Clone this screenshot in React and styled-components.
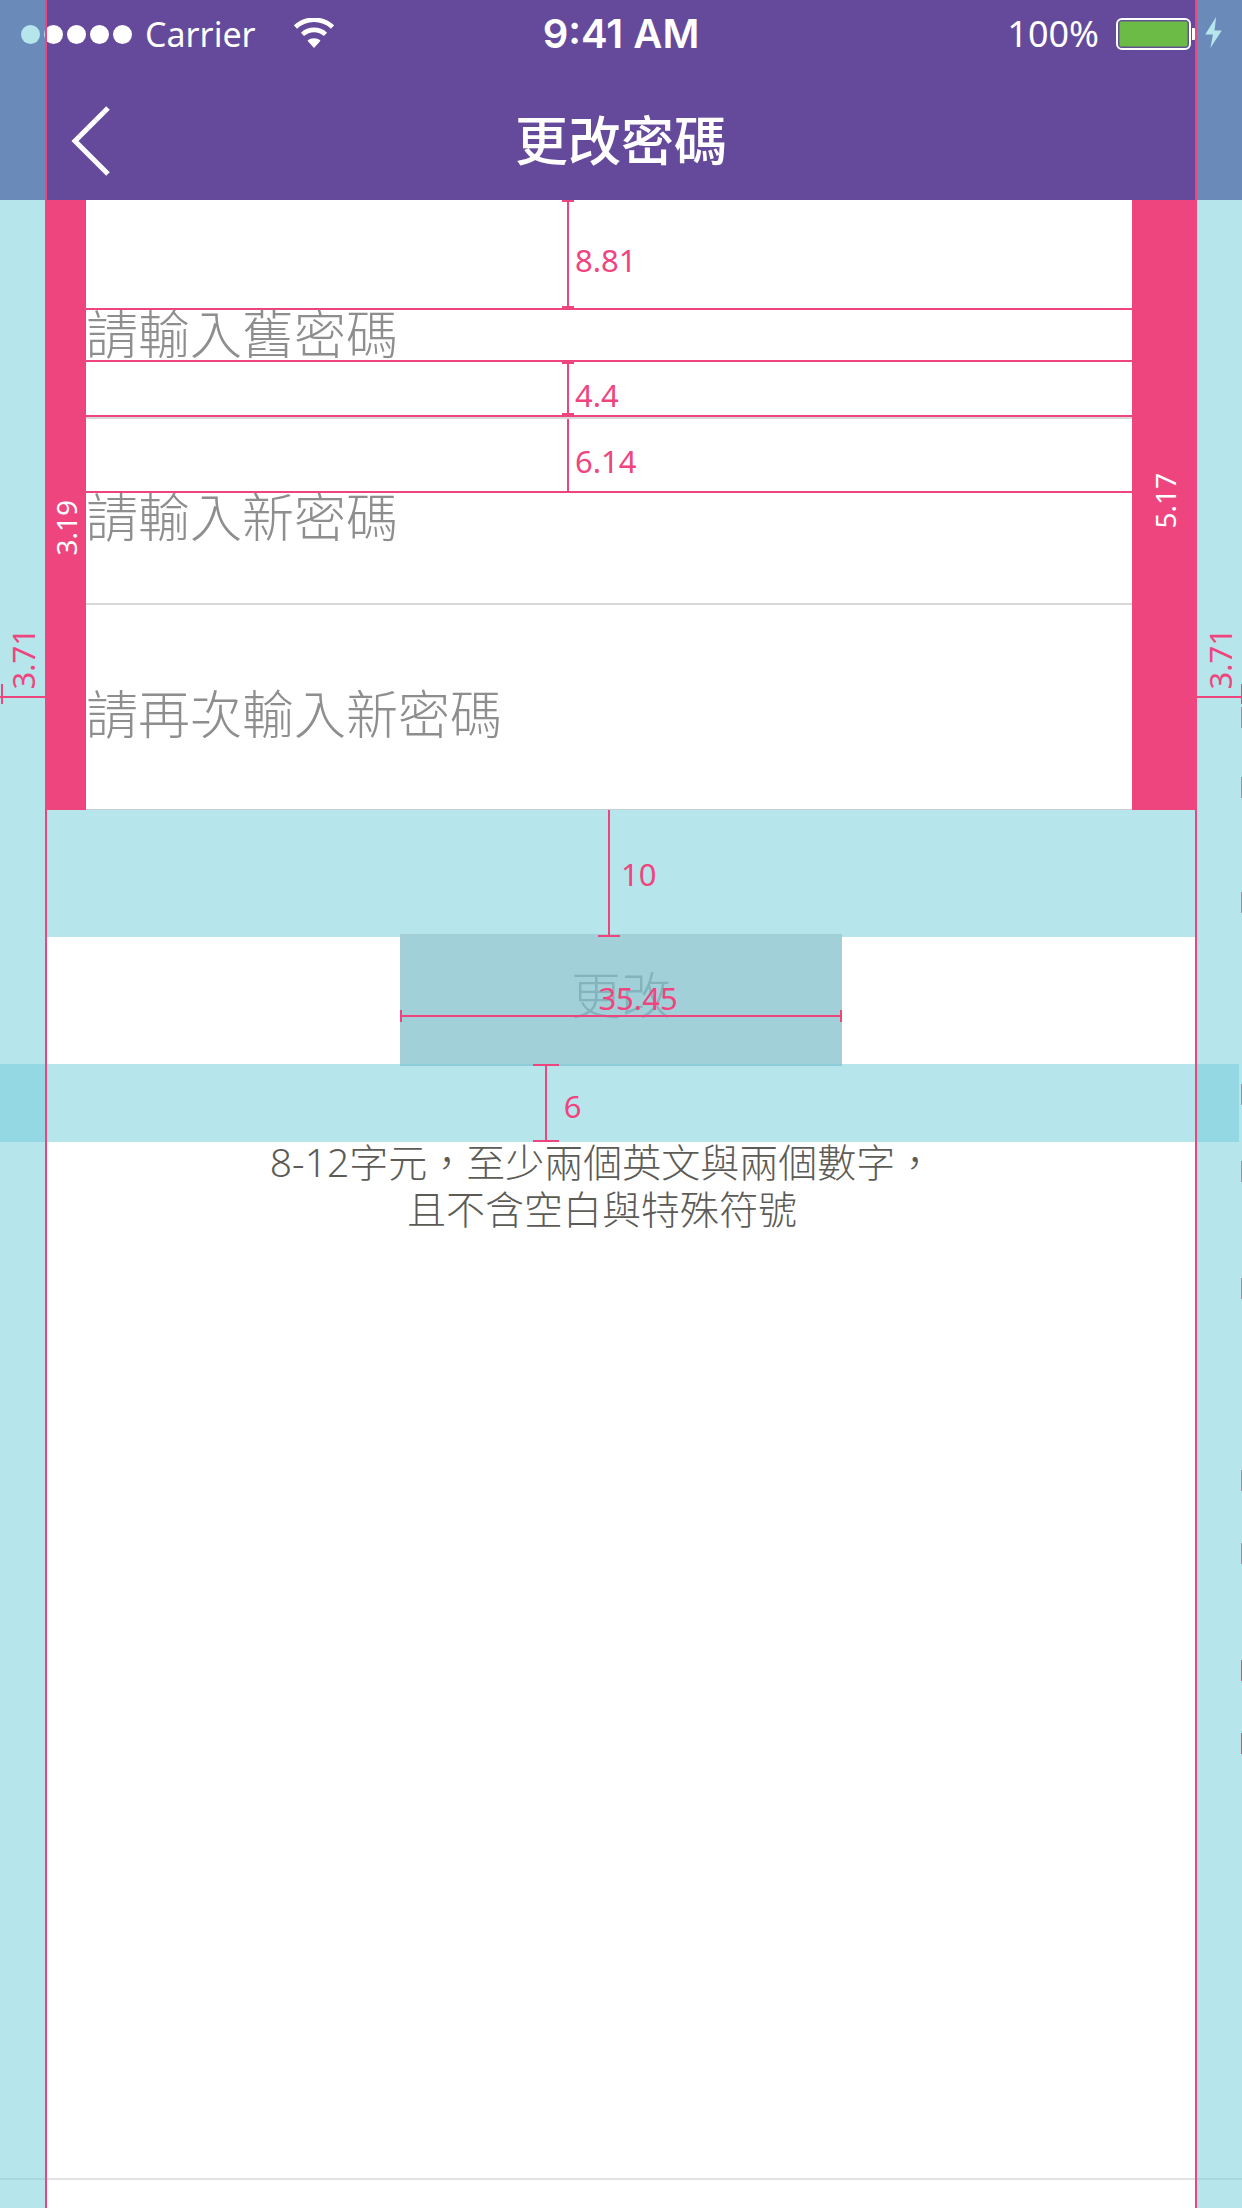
import React from "react";
import styled, { createGlobalStyle, css } from "styled-components";

const pink = "#ef457f";
const purple = "#654a9b";
const cyan = "#b6e5ec";
const glass = "rgba(112, 204, 218, 0.5)";
const latin = `"Noto Sans", "Open Sans", "Noto Sans CJK TC", sans-serif`;

const GlobalStyle = createGlobalStyle`
  *, *::before, *::after { box-sizing: border-box; }
  body { margin: 0; background: #fff; font-family: ${latin}; }
  button, input { font: inherit; border: 0; margin: 0; padding: 0; background: none; }
`;

const Page = styled.div`
  position: relative;
  display: flex;
  flex-direction: column;
  min-height: 100vh;
  overflow: hidden;
`;

const Header = styled.header`
  background: ${purple};
  color: #fff;
`;

const StatusBar = styled.div`
  display: grid;
  grid-template-columns: 1fr auto 1fr;
  align-items: center;
  height: 68px;
  padding: 0 20px;
  line-height: 40px;
`;

const StatusGroup = styled.div`
  display: flex;
  align-items: center;
  justify-content: ${(p) => (p.$end ? "flex-end" : "flex-start")};
  font-size: ${(p) => (p.$end ? 36 : 34)}px;
`;

const Dots = styled.div`
  display: flex;
  gap: 4px;
  margin: 0 13px 0 1px;
`;

const Dot = styled.span`
  width: 19px;
  height: 19px;
  border-radius: 50%;
  background: #fff;
`;

const WifiIcon = styled.svg`
  width: 40px;
  height: 30px;
  margin-left: 38px;
  margin-bottom: 2px;
`;

const Time = styled.time`
  font-family: Inter, sans-serif;
  font-weight: 600;
  font-size: 40px;
`;

const BatteryIcon = styled.svg`
  flex: none;
  width: 81px;
  height: 32px;
  margin: 0 8px 0 17px;
`;

const BoltIcon = styled.svg`
  flex: none;
  width: 17px;
  height: 31px;
  margin-bottom: 4px;
`;

const NavBar = styled.nav`
  display: grid;
  grid-template-columns: 1fr auto 1fr;
  align-items: center;
  height: 132px;
  padding: 14px 71px 0;
`;

const BackButton = styled.button`
  justify-self: start;
  display: flex;
  cursor: pointer;
  svg { width: 40px; height: 70px; }
`;

const Title = styled.h1`
  margin: 0 0 6px;
  font-family: "Noto Sans CJK TC", sans-serif;
  font-size: 53px;
  line-height: 72px;
  font-weight: 500;
`;

const Main = styled.main`
  flex: 1;
`;

const FormArea = styled.div`
  display: flex;
  margin: 0 45px;
`;

const Strip = styled.div`
  display: flex;
  justify-content: center;
  flex: 0 0 ${(p) => p.$width}px;
  padding-top: ${(p) => p.$offset}px;
  background: ${pink};
  color: #fff;
`;

const SideLabel = styled.span`
  align-self: ${(p) => (p.$center ? "center" : "flex-start")};
  writing-mode: vertical-rl;
  transform: rotate(180deg);
  font-size: ${(p) => (p.$center ? 31 : 28)}px;
  line-height: 40px;
`;

const Fields = styled.div`
  flex: 1;
  min-width: 0;
  border-bottom: 1px solid #c8cfd0;
`;

const Rule = styled.div`
  height: 2px;
  background: ${(p) => (p.$grey ? "#d8d8d8" : pink)};
`;

const Gap = styled.div`
  display: flex;
  align-items: stretch;
  height: ${(p) => p.$height}px;
`;

const Input = styled.input`
  display: block;
  width: 100%;
  height: 76px;
  margin: -16px 0 -10px;
  font-family: "Noto Sans CJK TC", sans-serif;
  font-weight: 300;
  font-size: 52px;
  line-height: 76px;
  color: #555;
  outline: 0;
  &::placeholder { color: #8e8e8e; opacity: 1; }
`;

const Bracket = styled.span`
  position: relative;
  z-index: 1;
  display: flex;
  justify-content: center;
  width: ${(p) => p.$cap}px;
  ${(p) => !p.$openTop && css`border-top: 2px solid ${pink};`}
  ${(p) => !p.$openBottom && css`border-bottom: 2px solid ${pink};`}
  &::before {
    content: "";
    width: 2px;
    background: ${pink};
  }
`;

const Measure = styled.div`
  display: flex;
  gap: ${(p) => p.$gap}px;
  margin-left: ${(p) => p.$left}%;
  color: ${pink};
  font-size: 31px;
  line-height: 40px;
`;

const MeasureText = styled.span`
  align-self: center;
  padding-top: ${(p) => p.$drop}px;
`;

const Band = styled.div`
  display: flex;
  height: 127px;
  margin: 0 47px;
  background: ${cyan};
`;

const GlassBand = styled.div`
  position: relative;
  display: flex;
  height: 78px;
  margin-right: 3px;
  background: ${glass};
`;

const ActionRow = styled.div`
  position: relative;
  display: flex;
  justify-content: center;
  height: 127px;
`;

const SubmitButton = styled.button`
  flex: 0 0 442px;
  height: 132px;
  margin-top: -3px;
  padding-bottom: 16px;
  border: 1px solid #a5cdd5;
  background: #a2d0d8;
  color: #83b3bc;
  font-family: "Noto Sans CJK TC", sans-serif;
  font-weight: 300;
  font-size: 50px;
  cursor: pointer;
`;

const WidthMeasure = styled.div`
  position: absolute;
  top: 41px;
  left: 50%;
  width: 442px;
  transform: translateX(-50%);
  color: ${pink};
  font-size: 31px;
  line-height: 40px;
  text-align: center;
  padding-left: 34px;
  pointer-events: none;
`;

const WidthLine = styled.span`
  position: absolute;
  top: 32px;
  left: 0;
  width: 100%;
  height: 12px;
  border: solid ${pink};
  border-width: 0 2px;
  &::before {
    content: "";
    display: block;
    height: 2px;
    margin-top: 5px;
    background: ${pink};
  }
`;

const Hint = styled.p`
  margin: -4px 0 0;
  padding-right: 38px;
  font-family: "Noto Sans", "Noto Sans CJK TC", sans-serif;
  font-weight: 300;
  font-size: 39px;
  line-height: 47px;
  text-align: center;
  color: #5c5b56;
`;

const Footer = styled.footer`
  height: 30px;
  border-top: 2px solid #e3e3e3;
`;

const Gutter = styled.aside`
  position: absolute;
  top: 0;
  bottom: 0;
  ${(p) => p.$side}: 0;
  width: 47px;
  padding-top: 628px;
  border: 0 solid ${pink};
  ${(p) => (p.$side === "left" ? "border-right-width" : "border-left-width")}: 2px;
  background: ${glass};
  background-clip: padding-box;
  color: ${pink};
  display: flex;
  flex-direction: column;
  pointer-events: none;
`;

const GutterLine = styled.span`
  height: 20px;
  margin-top: -6px;
  ${(p) => (p.$side === "left"
    ? css`margin-left: 1px; border-left: 2px solid ${pink};`
    : css`border-right: 1px solid ${pink};`)}
  &::before {
    content: "";
    display: block;
    height: 2px;
    margin: 12px 0 0 ${(p) => (p.$side === "left" ? "-3px" : "0")};
    background: ${pink};
  }
`;

const Tick = styled.span`
  position: absolute;
  right: 0;
  top: ${(p) => p.$top}px;
  width: 1px;
  height: 21px;
  background: ${(p) => (p.$bright ? pink : "#b584ac")};
`;

const ticks = [707, 777, 892, 1084, 1161, 1278, 1470, 1543, 1660, 1733];

function Field({ id, label }) {
  return <Input id={id} type="password" placeholder={label} aria-label={label} />;
}

function VerticalMeasure({ value, left = 45.5, cap = 12, gap = 1, drop = 12, openTop, openBottom }) {
  return (
    <Measure $left={left} $gap={gap}>
      <Bracket $cap={cap} $openTop={openTop} $openBottom={openBottom} />
      <MeasureText $drop={drop}>{value}</MeasureText>
    </Measure>
  );
}

export default function App() {
  return (
    <Page lang="zh-TW">
      <GlobalStyle />
      <Header>
        <StatusBar>
          <StatusGroup>
            <Dots>
              {[0, 1, 2, 3, 4].map((n) => <Dot key={n} />)}
            </Dots>
            Carrier
            <WifiIcon viewBox="0 0 40 30" fill="none" stroke="#fff" aria-hidden="true">
              <path d="M1.5 9C12-.7 28-.7 38.500 9" strokeWidth="4.600" />
              <path d="M8.500 16.400C15 10.400 25 10.400 31.500 16.400" strokeWidth="4.600" />
              <path d="M13.500 22.700C17 19.500 23 19.500 26.500 22.700L20 30Z" fill="#fff" stroke="none" />
            </WifiIcon>
          </StatusGroup>
          <Time>9:41 AM</Time>
          <StatusGroup $end>
            100%
            <BatteryIcon viewBox="0 0 81 32" aria-hidden="true">
              <rect x="1" y="1" width="73" height="30" rx="5" fill="none" stroke="#fff" strokeWidth="2" />
              <rect x="3" y="3" width="69" height="26" rx="2" fill="#6cbb46" stroke="#5c5a86" strokeWidth="1" />
              <path d="M76 10h2q3 1 3 6t-3 6h-2z" fill="#fff" />
            </BatteryIcon>
            <BoltIcon viewBox="0 0 16 30" aria-hidden="true">
              <path d="M10.500 0L0 17h7.500L5 30L16 13H9z" fill="#fff" />
            </BoltIcon>
          </StatusGroup>
        </StatusBar>
        <NavBar>
          <BackButton type="button" aria-label="返回">
            <svg viewBox="0 0 40 70" fill="none" stroke="#fff" strokeWidth="5" aria-hidden="true">
              <path d="M37 2L4 35L37 68" />
            </svg>
          </BackButton>
          <Title>更改密碼</Title>
        </NavBar>
      </Header>

      <Main as="form">
        <FormArea>
          <Strip $width={41} $offset={300}>
            <SideLabel>3.19</SideLabel>
          </Strip>
          <Fields>
            <Gap $height={108}><VerticalMeasure value="8.81" /></Gap>
            <Rule />
            <Field id="old-password" label="請輸入舊密碼" />
            <Rule />
            <Gap $height={53}><VerticalMeasure value="4.4" /></Gap>
            <Rule />
            <Rule $grey />
            <Gap $height={72}><VerticalMeasure value="6.14" openTop openBottom /></Gap>
            <Rule />
            <Field id="new-password" label="請輸入新密碼" />
            <Gap $height={60} />
            <Rule $grey />
            <Gap $height={85} />
            <Field id="repeat-password" label="請再次輸入新密碼" />
            <Gap $height={69} />
          </Fields>
          <Strip $width={65} $offset={273}>
            <SideLabel>5.17</SideLabel>
          </Strip>
        </FormArea>
        <Band>
          <VerticalMeasure value="10" left={48} cap={22} gap={1} drop={0} openTop />
        </Band>
        <ActionRow>
          <SubmitButton type="button">更改</SubmitButton>
          <WidthMeasure>
            35.45
            <WidthLine />
          </WidthMeasure>
        </ActionRow>
        <GlassBand>
          <VerticalMeasure value="6" left={43} cap={26} gap={5} drop={6} />
        </GlassBand>
        <Hint>
          8-12字元，至少兩個英文與兩個數字，
          <br />
          且不含空白與特殊符號
        </Hint>
      </Main>
      <Footer />

      <Gutter $side="left">
        <SideLabel $center>3.71</SideLabel>
        <GutterLine $side="left" />
      </Gutter>
      <Gutter $side="right">
        <SideLabel $center>3.71</SideLabel>
        <GutterLine $side="right" />
        {ticks.map((top) => <Tick key={top} $top={top} $bright={top >= 1660} />)}
      </Gutter>
    </Page>
  );
}
